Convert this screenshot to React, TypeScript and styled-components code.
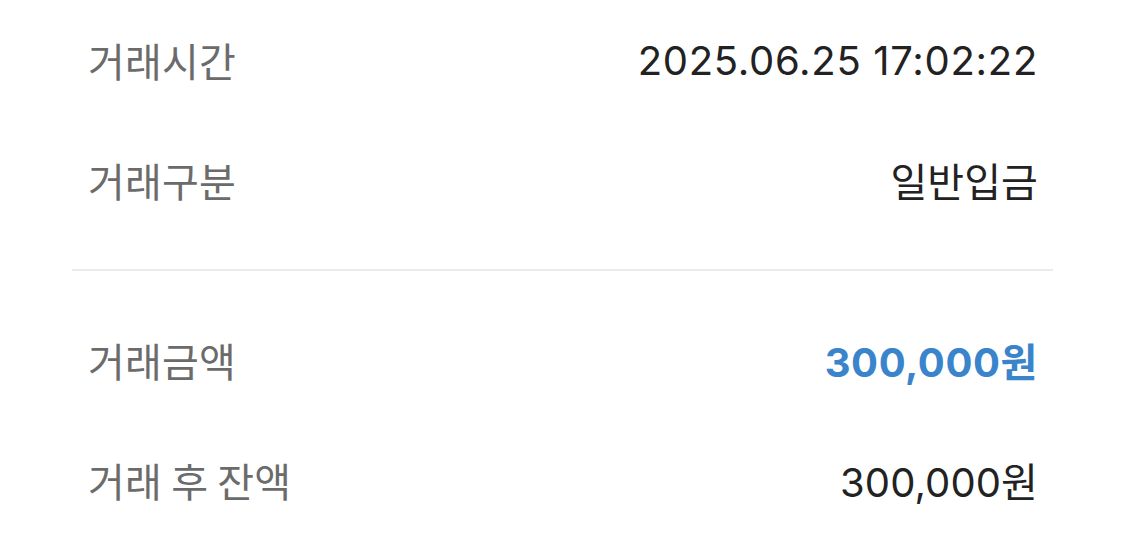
import React from "react";
import styled, { createGlobalStyle } from "styled-components";

const Global = createGlobalStyle`
  html, body { margin: 0; padding: 0; background: #ffffff; }
  body { font-family: Inter, "Noto Sans CJK KR", sans-serif; }
`;

const Page = styled.div`
  width: 1125px;
  height: 555px;
  box-sizing: border-box;
  padding: 0 72px;
`;

const Inner = styled.div`
  width: 981px;
  display: flex;
  flex-direction: column;
`;

const Row = styled.div`
  height: 120px;
  display: flex;
  align-items: center;
  justify-content: space-between;
  padding: 0 15px 0 16px;
`;

const Label = styled.span`
  font-family: "Noto Sans CJK KR", sans-serif;
  font-size: 40px;
  color: #6b6b6b;
  letter-spacing: 0.2px;
`;

const Value = styled.span<{ $accent?: boolean; $wide?: boolean }>`
  font-family: Inter, "Noto Sans CJK KR", sans-serif;
  font-size: 40px;
  font-weight: ${(p) => (p.$accent ? 700 : 400)};
  color: ${(p) => (p.$accent ? "#3a84cc" : "#222222")};
  letter-spacing: ${(p) => (p.$accent ? "0.6px" : p.$wide ? "0.7px" : "0.1px")};
`;

const Divider = styled.hr`
  border: none;
  height: 2px;
  background: #ebebeb;
  margin: 29px 0;
`;

export default function App() {
  return (
    <>
      <Global />
      <Page>
        <Inner>
          <Row>
            <Label>거래시간</Label>
            <Value $wide>2025.06.25 17:02:22</Value>
          </Row>
          <Row>
            <Label>거래구분</Label>
            <Value>일반입금</Value>
          </Row>
          <Divider />
          <Row>
            <Label>거래금액</Label>
            <Value $accent>300,000원</Value>
          </Row>
          <Row>
            <Label>거래 후 잔액</Label>
            <Value>300,000원</Value>
          </Row>
        </Inner>
      </Page>
    </>
  );
}
